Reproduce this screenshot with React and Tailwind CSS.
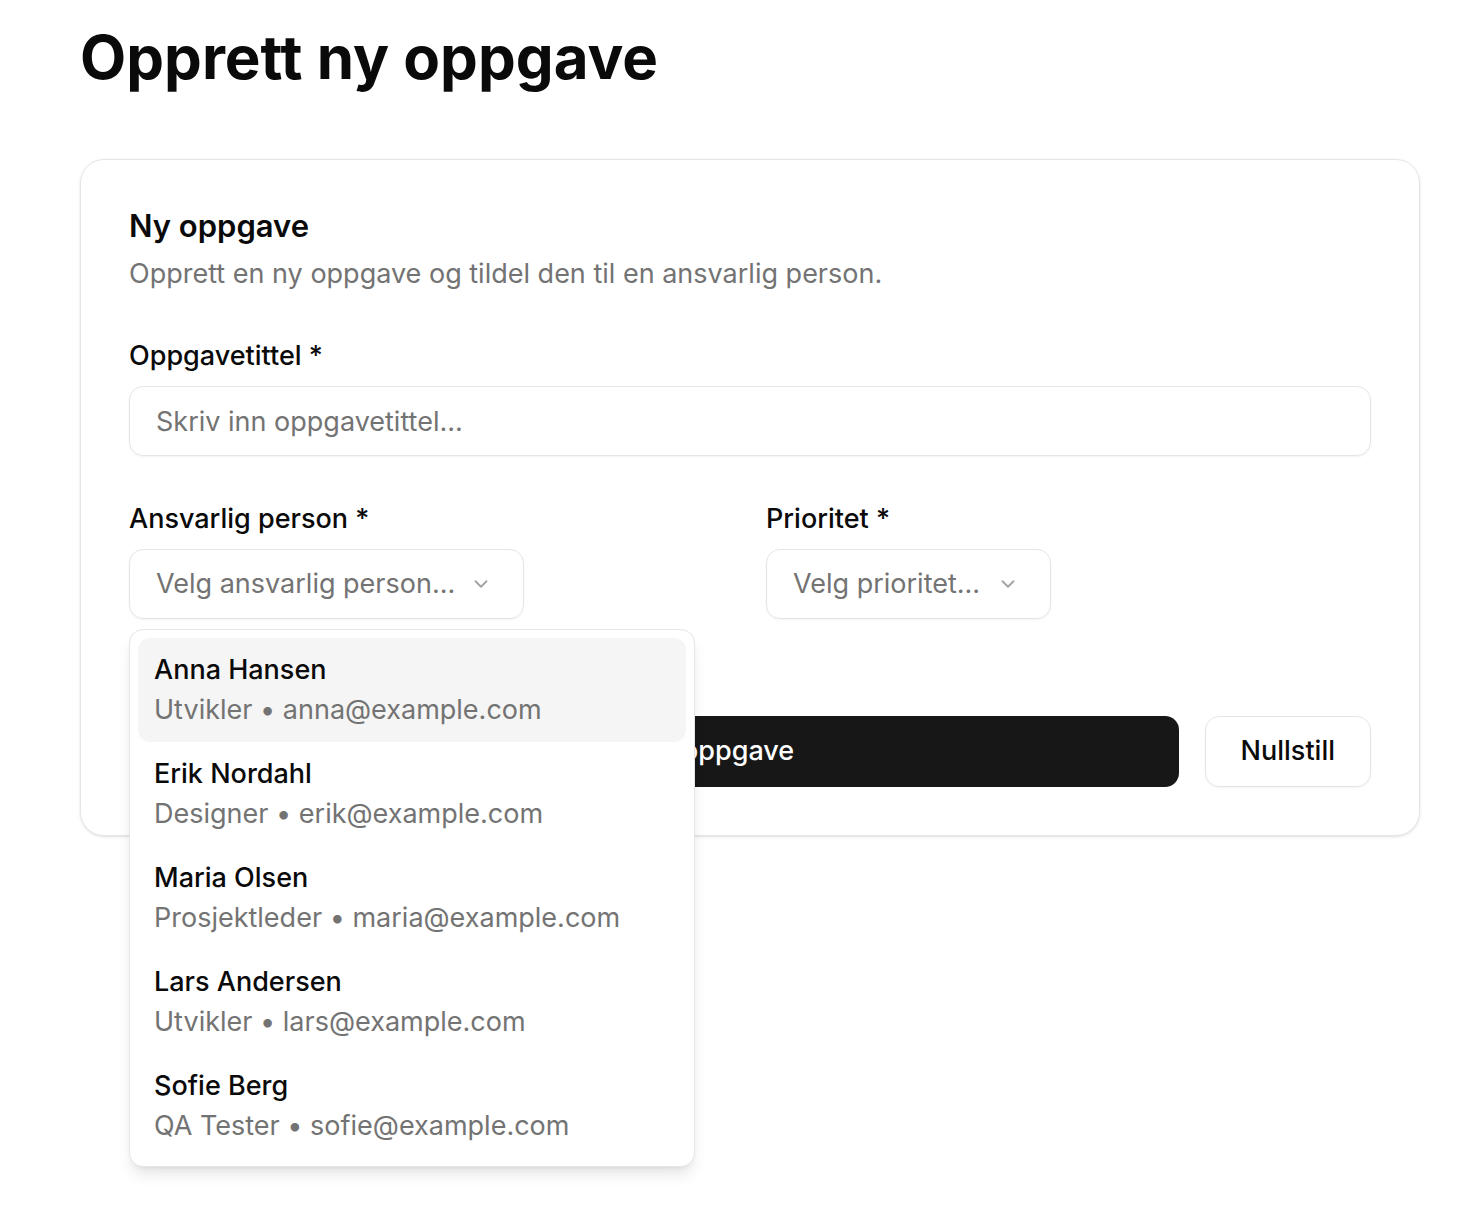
import { ChevronDown } from "lucide-react";

const people = [
  { name: "Anna Hansen", role: "Utvikler", email: "anna@example.com" },
  { name: "Erik Nordahl", role: "Designer", email: "erik@example.com" },
  { name: "Maria Olsen", role: "Prosjektleder", email: "maria@example.com" },
  { name: "Lars Andersen", role: "Utvikler", email: "lars@example.com" },
  { name: "Sofie Berg", role: "QA Tester", email: "sofie@example.com" },
];

export default function App() {
  return (
    <div
      className="min-h-screen bg-white text-[#0a0a0a] pl-20 pr-16 pt-[27px]"
      style={{ fontFamily: "Inter, 'Noto Sans', sans-serif" }}
    >
      <h1 className="text-[60px] leading-none font-bold">Opprett ny oppgave</h1>

      {/* Card */}
      <div className="mt-[72px] border border-[#e5e5e5] rounded-3xl shadow-sm p-12">
        <h2 className="text-[31px] leading-9 font-semibold">Ny oppgave</h2>
        <p className="mt-3 text-[27px] leading-9 text-[#737373]">
          Opprett en ny oppgave og tildel den til en ansvarlig person.
        </p>

        <div className="mt-[46px]">
          <label className="block text-[27px] leading-9 font-medium">Oppgavetittel *</label>
          <input
            type="text"
            placeholder="Skriv inn oppgavetittel..."
            className="mt-3 w-full h-[70px] rounded-[14px] border border-[#e5e5e5] shadow-xs px-[26px] text-[27px] placeholder:text-[#737373] outline-none"
          />
        </div>

        <div className="mt-[45px] grid grid-cols-2 gap-8">
          <div>
            <label className="block text-[27px] leading-9 font-medium">Ansvarlig person *</label>
            <div className="relative mt-3 w-fit">
              <button className="h-[70px] flex items-center gap-[15px] pl-[26px] pr-[31px] rounded-[14px] border border-[#e5e5e5] shadow-xs text-[27px] text-[#737373]">
                Velg ansvarlig person...
                <ChevronDown size={22} strokeWidth={2} className="text-[#a3a3a3]" />
              </button>

              {/* Open dropdown */}
              <div className="absolute left-0 top-[80px] z-10 w-[566px] bg-white border border-[#e5e5e5] rounded-[14px] shadow-lg p-2">
                {people.map((p, i) => (
                  <div
                    key={p.email}
                    className={`rounded-[12px] px-4 py-3 ${i === 0 ? "bg-[#f5f5f5]" : ""}`}
                  >
                    <div className="text-[27px] leading-10 font-medium">{p.name}</div>
                    <div className="text-[27px] leading-10 text-[#737373]">
                      {p.role} • {p.email}
                    </div>
                  </div>
                ))}
              </div>
            </div>
          </div>

          <div>
            <label className="block text-[27px] leading-9 font-medium">Prioritet *</label>
            <div className="mt-3 w-fit">
              <button className="h-[70px] flex items-center gap-[17px] pl-[26px] pr-[31px] rounded-[14px] border border-[#e5e5e5] shadow-xs text-[27px] text-[#737373]">
                Velg prioritet...
                <ChevronDown size={22} strokeWidth={2} className="text-[#a3a3a3]" />
              </button>
            </div>
          </div>
        </div>

        <div className="mt-[97px] flex gap-[26px]">
          <button className="flex-1 h-[71px] pl-16 rounded-[14px] bg-[#171717] text-white text-[27px] font-medium">
            Opprett oppgave
          </button>
          <button className="h-[71px] px-[35px] rounded-[14px] border border-[#e5e5e5] shadow-xs text-[27px] font-medium">
            Nullstill
          </button>
        </div>
      </div>
    </div>
  );
}
